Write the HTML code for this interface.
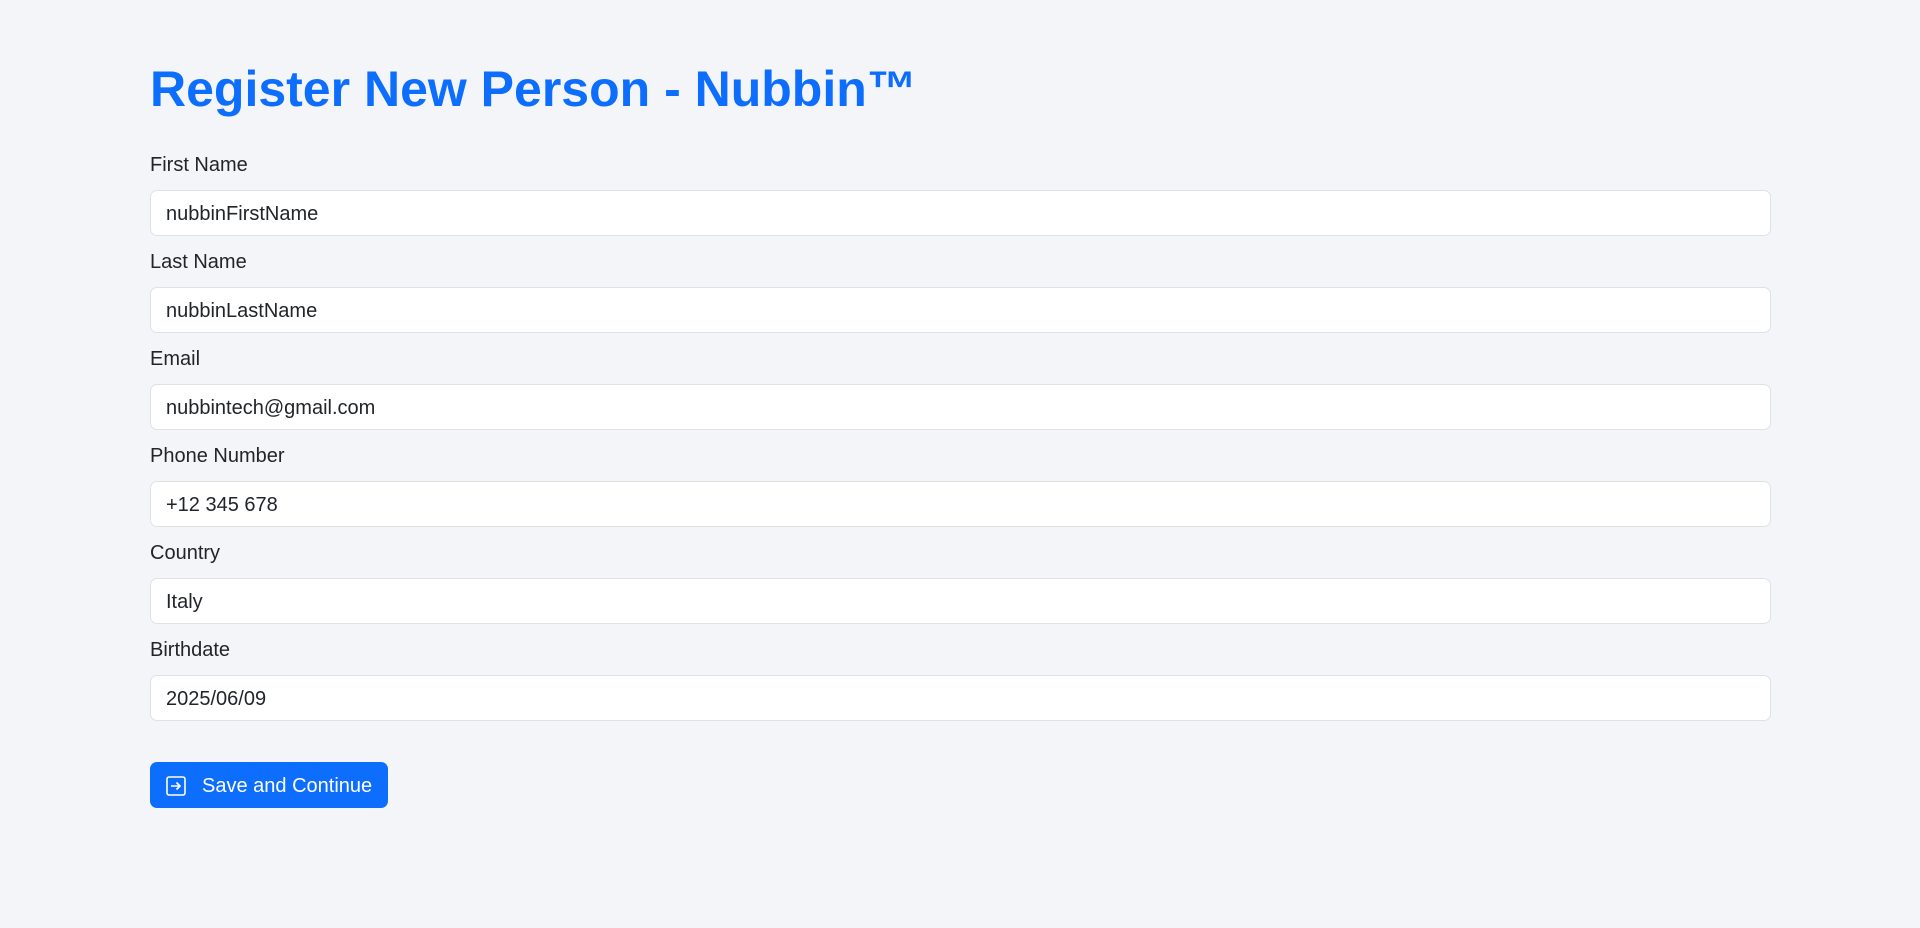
<!DOCTYPE html>
<html><head><meta charset="utf-8"><style>
body{margin:0;background:#f4f5f9;font-family:"Liberation Sans",Arial,sans-serif;color:#212529;width:1920px;height:928px;overflow:hidden}
h1{position:absolute;left:150px;top:59px;margin:0;font-size:50px;line-height:60px;font-weight:bold;color:#0d6efd;font-family:"Liberation Sans",Arial,sans-serif}
.l{position:absolute;left:150px;font-size:20px;line-height:24px}
.i{position:absolute;left:150px;width:1604px;height:44px;background:#fff;border:1px solid #dee2e6;border-radius:7px;font-size:20px;line-height:46px;padding-left:15px;box-sizing:content-box}
.b{position:absolute;left:150px;top:762px;width:238px;height:46px;background:#0d6efd;border-radius:7px;color:#fff;font-size:20px;line-height:48px}
</style></head><body>
<h1>Register New Person - Nubbin™</h1>
<div class="l" style="top:153px">First Name</div><div class="i" style="top:190px">nubbinFirstName</div>
<div class="l" style="top:250px">Last Name</div><div class="i" style="top:287px">nubbinLastName</div>
<div class="l" style="top:347px">Email</div><div class="i" style="top:384px">nubbintech@gmail.com</div>
<div class="l" style="top:444px">Phone Number</div><div class="i" style="top:481px">+12 345 678</div>
<div class="l" style="top:541px">Country</div><div class="i" style="top:578px">Italy</div>
<div class="l" style="top:638px">Birthdate</div><div class="i" style="top:675px">2025/06/09</div>
<div class="b"><svg style="position:absolute;left:16px;top:14px" width="20" height="20" viewBox="0 0 20 20" fill="none" stroke="#fff" stroke-width="1.6"><rect x="1" y="1" width="18" height="18" rx="2"/><path d="M5 10h9M10.5 6.5L14 10l-3.5 3.5"/></svg><span style="position:absolute;left:52px">Save and Continue</span></div>
</body></html>
